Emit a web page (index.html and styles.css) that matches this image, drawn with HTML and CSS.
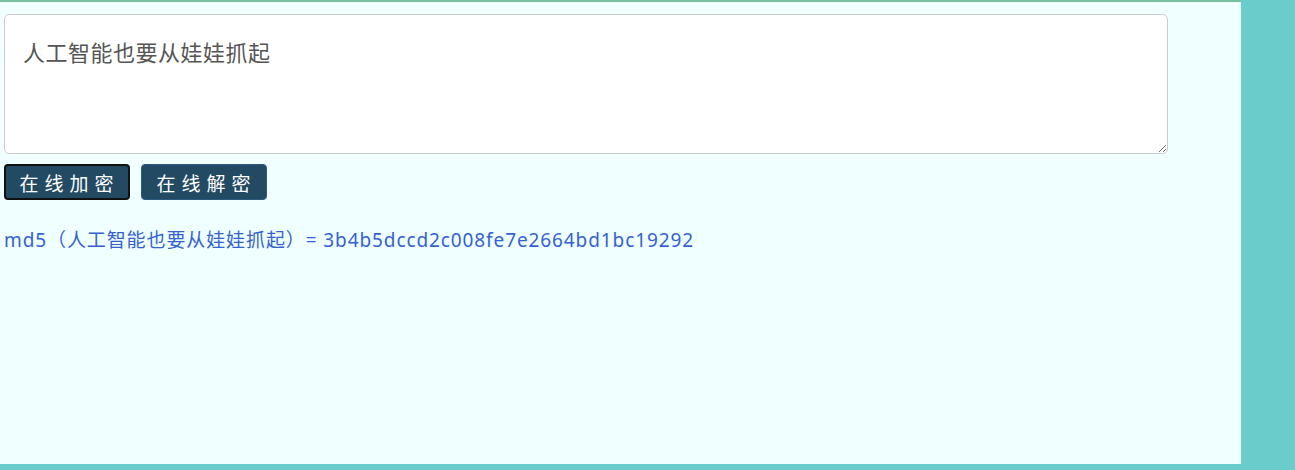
FILE: index.html
```html
<!DOCTYPE html>
<html lang="zh-CN">
  <head>
    <meta charset="UTF-8" />
    <meta name="viewport" content="width=device-width, initial-scale=1.0" />
    <title>MD5 在线加密</title>
    <link rel="stylesheet" href="styles.css">
  </head>
  <body>
    <div class="panel">
      <textarea class="source">人工智能也要从娃娃抓起</textarea>
      <div class="buttons">
        <button class="btn active">在线加密</button>
        <button class="btn">在线解密</button>
      </div>
      <p class="result">md5（人工智能也要从娃娃抓起）= 3b4b5dccd2c008fe7e2664bd1bc19292</p>
    </div>
  </body>
</html>
```

FILE: styles.css
```css
body {
  margin: 0;
  padding: 0;
  background-color: #68cdcb;
  font-family: "Noto Sans", "Noto Sans CJK SC", sans-serif;
  height: 470px;
  overflow: hidden;
}
.panel {
  width: 1241px;
  height: 464px;
  background-color: #f0ffff;
  border-top: 2px solid #76bf9c;
  padding: 12px 4px 0;
  box-sizing: border-box;
}
.source {
  display: block;
  width: 1164px;
  height: 140px;
  box-sizing: border-box;
  margin: 0;
  padding: 19px 18px;
  border: 1px solid #ccc;
  border-radius: 5px;
  background-color: #fff;
  font-family: "Noto Sans CJK SC", sans-serif;
  font-size: 22px;
  letter-spacing: 0.5px;
  line-height: 34px;
  color: #555;
}
.buttons {
  display: flex;
  gap: 11px;
  margin-top: 10px;
}
.btn {
  width: 126px;
  height: 36px;
  padding: 0 0 0 5px;
  background-color: #234a63;
  color: #fff;
  border: 1px solid #2b5a7e;
  border-radius: 4px;
  font-family: "Noto Sans CJK SC", sans-serif;
  font-size: 19px;
  letter-spacing: 6px;
  cursor: pointer;
}
.btn.active {
  border: 2px solid #111;
}
.result {
  margin: 26px 0 0;
  font-size: 19px;
  letter-spacing: 0.9px;
  line-height: 28px;
  color: #3562d0;
}
```
